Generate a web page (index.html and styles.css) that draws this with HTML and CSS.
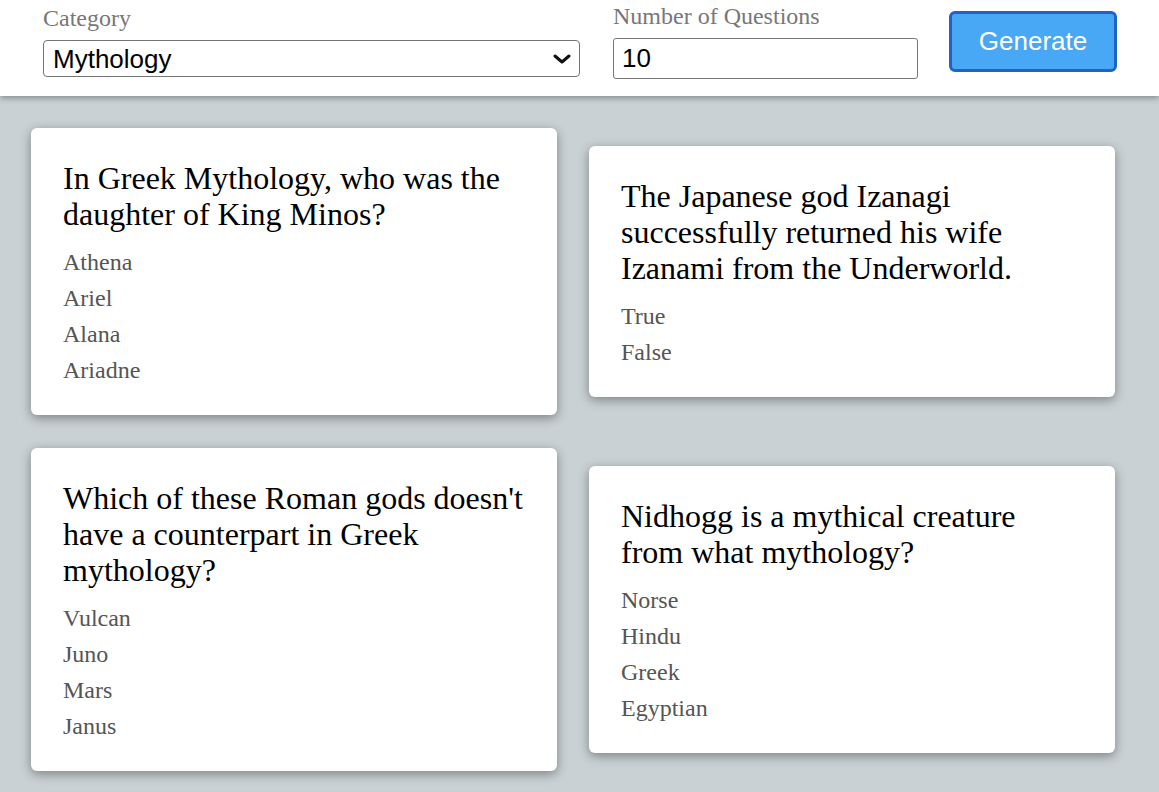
FILE: index.html
```html
<!DOCTYPE html>
<html lang="en">
<head>
<meta charset="utf-8">
<title>Trivia Generator</title>
<link rel="stylesheet" href="styles.css">
</head>
<body>
<header class="toolbar">
  <div class="field field-category">
    <label class="field-label" for="category">Category</label>
    <div class="select-wrap">
      <select id="category" class="select">
        <option>Mythology</option>
      </select>
      <svg class="chevron" width="18" height="10" viewBox="0 0 18 10" aria-hidden="true"><path d="M2 2 L9 8 L16 2" fill="none" stroke="#111" stroke-width="3" stroke-linecap="round" stroke-linejoin="round"/></svg>
    </div>
  </div>
  <div class="field field-amount">
    <label class="field-label" for="amount">Number of Questions</label>
    <input id="amount" class="input" type="number" value="10">
  </div>
  <button class="btn" type="button">Generate</button>
</header>
<main class="cards">
  <article class="card">
    <h2 class="question">In Greek Mythology, who was the daughter of King Minos?</h2>
    <ul class="answers">
      <li>Athena</li>
      <li>Ariel</li>
      <li>Alana</li>
      <li>Ariadne</li>
    </ul>
  </article>
  <article class="card">
    <h2 class="question">The Japanese god Izanagi successfully returned his wife Izanami from the Underworld.</h2>
    <ul class="answers">
      <li>True</li>
      <li>False</li>
    </ul>
  </article>
  <article class="card">
    <h2 class="question">Which of these Roman gods doesn't have a counterpart in Greek mythology?</h2>
    <ul class="answers">
      <li>Vulcan</li>
      <li>Juno</li>
      <li>Mars</li>
      <li>Janus</li>
    </ul>
  </article>
  <article class="card">
    <h2 class="question">Nidhogg is a mythical creature from what mythology?</h2>
    <ul class="answers">
      <li>Norse</li>
      <li>Hindu</li>
      <li>Greek</li>
      <li>Egyptian</li>
    </ul>
  </article>
</main>
</body>
</html>
```

FILE: styles.css
```css
html, body {
  margin: 0;
  padding: 0;
  overflow: hidden;
}
body {
  background: #c9d1d4;
  font-family: "Liberation Serif", "Times New Roman", serif;
  min-height: 792px;
}
.toolbar {
  position: relative;
  z-index: 1;
  box-sizing: border-box;
  height: 96px;
  background: #fff;
  box-shadow: 0 2px 6px rgba(0, 0, 0, 0.35);
  display: flex;
  align-items: center;
  padding: 0 42px 14px 43px;
}
.field {
  display: flex;
  flex-direction: column;
}
.field-category {
  width: 537px;
  margin-right: 33px;
}
.field-amount {
  width: 305px;
  margin-right: 31px;
}
.field-label {
  font-size: 24px;
  line-height: 27px;
  color: #777;
  margin-bottom: 8px;
}
.select-wrap {
  position: relative;
}
.select {
  -webkit-appearance: none;
  appearance: none;
  box-sizing: border-box;
  width: 100%;
  height: 37px;
  margin: 0;
  padding: 0 36px 0 9px;
  border: 1px solid #767676;
  border-radius: 4px;
  background: #fff;
  color: #000;
  font-family: "Liberation Sans", Arial, sans-serif;
  font-size: 26px;
}
.chevron {
  position: absolute;
  right: 9px;
  top: 14px;
  pointer-events: none;
}
.input {
  -webkit-appearance: none;
  appearance: none;
  -moz-appearance: textfield;
  box-sizing: border-box;
  width: 100%;
  height: 41px;
  margin: 0;
  padding: 0 8px;
  border: 1px solid #767676;
  border-radius: 3px;
  background: #fff;
  color: #000;
  font-family: "Liberation Sans", Arial, sans-serif;
  font-size: 26px;
}
.input::-webkit-outer-spin-button,
.input::-webkit-inner-spin-button {
  -webkit-appearance: none;
  margin: 0;
}
.btn {
  box-sizing: border-box;
  width: 168px;
  height: 61px;
  margin: 0;
  padding: 0;
  background: #48a8f6;
  border: 3px solid #1f62c8;
  border-radius: 6px;
  color: #fff;
  font-family: "Liberation Sans", Arial, sans-serif;
  font-size: 26px;
  cursor: pointer;
}
.cards {
  display: grid;
  grid-template-columns: 1fr 1fr;
  align-items: center;
  gap: 33px 32px;
  padding: 32px 44px 0 31px;
}
.card {
  background: #fff;
  border-radius: 6px;
  box-shadow: 0 3px 11px rgba(0, 0, 0, 0.38);
  padding: 32px 32px 27px 32px;
}
.question {
  margin: 0 0 12px;
  font-size: 32px;
  line-height: 36px;
  font-weight: normal;
  color: #000;
}
.answers {
  list-style: none;
  margin: 0;
  padding: 0;
}
.answers li {
  font-size: 24px;
  line-height: 36px;
  color: #555;
}
```
